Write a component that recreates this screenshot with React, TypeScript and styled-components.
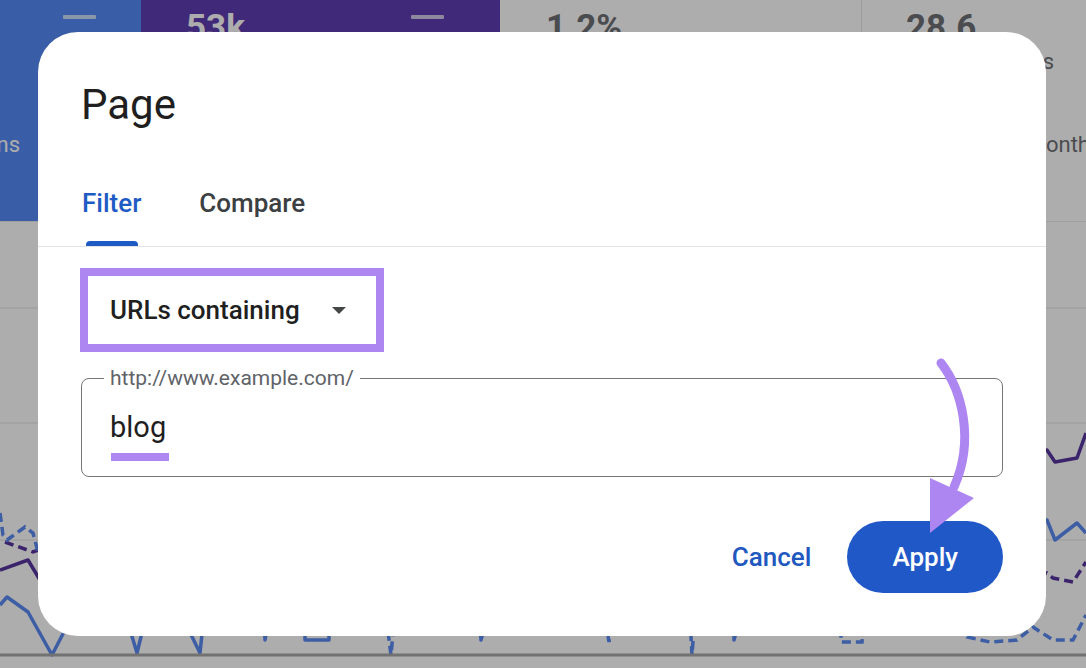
import React from 'react';
import styled, { createGlobalStyle } from 'styled-components';

const GlobalStyle = createGlobalStyle`
  html, body {
    margin: 0;
    padding: 0;
    background: #ffffff;
  }
  body {
    font-family: Roboto, 'Liberation Sans', Arial, sans-serif;
  }
`;

const Screen = styled.div`
  position: relative;
  width: 1086px;
  height: 668px;
  overflow: hidden;
  background: #ffffff;
`;

/* ---------- dashboard behind the dialog ---------- */

const MetricRow = styled.div`
  display: grid;
  grid-template-columns: 141px 359px 361px 1fr;
  height: 222px;
  border-bottom: 1px solid #ececec;
  box-sizing: border-box;
`;

const MetricCard = styled.div<{ $bg: string; $ink: string; $divider?: boolean }>`
  display: flex;
  flex-direction: column;
  background: ${p => p.$bg};
  color: ${p => p.$ink};
  border-left: ${p => (p.$divider ? '1px solid #e6e6e6' : 'none')};
  overflow: hidden;
  white-space: nowrap;
`;

const CardHead = styled.div<{ $padLeft: number; $padRight: number; $end?: boolean }>`
  display: flex;
  align-items: flex-start;
  justify-content: ${p => (p.$end ? 'flex-end' : 'space-between')};
  padding: 0 ${p => p.$padRight}px 0 ${p => p.$padLeft}px;
  height: 44px;
`;

const BigNumber = styled.div`
  font-size: 35px;
  font-weight: 700;
  line-height: 40px;
  margin-top: 8px;
`;

const CheckMark = styled.span`
  display: block;
  width: 33px;
  height: 4px;
  margin-top: 15px;
  border-radius: 1px;
  background: rgba(255, 255, 255, 0.72);
`;

/* labels that run past the card edge: flex-end keeps the tail in view */
const CardLabel = styled.div<{ $top: number; $end?: boolean; $pad: number }>`
  display: flex;
  justify-content: ${p => (p.$end ? 'flex-end' : 'flex-start')};
  margin-top: ${p => p.$top}px;
  font-size: 22px;
  line-height: 28px;
  padding: 0 ${p => (p.$end ? p.$pad : 0)}px 0 ${p => (p.$end ? 0 : p.$pad)}px;
`;

const ChartArea = styled.div`
  height: 446px;
`;

const ChartSvg = styled.svg`
  display: block;
  width: 1086px;
  height: 446px;
`;

const Scrim = styled.div`
  position: absolute;
  inset: 0;
  background: rgba(0, 0, 0, 0.32);
`;

/* ---------- dialog ---------- */

const Dialog = styled.div`
  position: absolute;
  left: 38px;
  top: 32px;
  width: 1008px;
  height: 604px;
  box-sizing: border-box;
  background: #ffffff;
  border-radius: 40px;
  display: flex;
  flex-direction: column;
  color: #1f1f1f;
`;

const Title = styled.h2`
  margin: 0;
  padding: 47px 43px 0 43px;
  font-size: 42px;
  font-weight: 400;
  line-height: 52px;
  color: #1f1f1f;
`;

const TabBar = styled.div`
  display: flex;
  gap: 58px;
  margin-top: 29px;
  padding: 0 43px 0 44px;
  border-bottom: 1px solid #e3e3e3;
`;

const Tab = styled.div<{ $active?: boolean }>`
  position: relative;
  height: 86px;
  display: flex;
  align-items: center;
  font-size: 26px;
  font-weight: 500;
  color: ${p => (p.$active ? '#1f5bc4' : '#3c4043')};

  &::after {
    content: '';
    display: ${p => (p.$active ? 'block' : 'none')};
    position: absolute;
    left: 4px;
    right: 3px;
    bottom: 0;
    height: 5px;
    border-radius: 4px 4px 0 0;
    background: #1f5bc4;
  }
`;

const Body = styled.div`
  display: flex;
  flex-direction: column;
  padding: 21px 43px 43px;
  flex: 1;
`;

const Highlight = styled.div`
  align-self: flex-start;
  margin-left: -1px;
  border: 8px solid #ae86f1;
`;

const Select = styled.div`
  display: flex;
  align-items: center;
  gap: 32px;
  width: 288px;
  height: 68px;
  box-sizing: border-box;
  padding: 0 0 0 22px;
  font-size: 26px;
  font-weight: 500;
  color: #1f1f1f;
`;

const Caret = styled.span`
  width: 0;
  height: 0;
  border-left: 7px solid transparent;
  border-right: 7px solid transparent;
  border-top: 7px solid #444746;
`;

const Field = styled.div`
  position: relative;
  margin-top: 26px;
  height: 99px;
  box-sizing: border-box;
  border: 1px solid #747775;
  border-radius: 8px;
  padding: 30px 28px 0;
`;

const FieldLabel = styled.span`
  position: absolute;
  left: 22px;
  top: -14px;
  padding: 0 6px;
  background: #ffffff;
  font-size: 21px;
  line-height: 26px;
  color: #5f6368;
`;

const FieldValue = styled.div`
  font-size: 29px;
  line-height: 36px;
  color: #1f1f1f;
`;

const Underline = styled.div`
  width: 58px;
  height: 8px;
  margin: 8px 0 0 1px;
  background: #ae86f1;
`;

const Actions = styled.div`
  display: flex;
  justify-content: flex-end;
  gap: 8px;
  margin-top: auto;
`;

const ActionButton = styled.button<{ $primary?: boolean }>`
  height: 72px;
  border: none;
  border-radius: 36px;
  padding: 0 ${p => (p.$primary ? 45 : 28)}px;
  font-family: inherit;
  font-size: 26px;
  font-weight: 500;
  background: ${p => (p.$primary ? '#2158c8' : 'transparent')};
  color: ${p => (p.$primary ? '#ffffff' : '#2158c0')};
  cursor: pointer;
`;

const Pointer = styled.svg`
  position: absolute;
  left: 915px;
  top: 350px;
  width: 70px;
  height: 190px;
  overflow: visible;
`;

/* chart series in chart-local coordinates (top of chart = 222px) */
const shift = (pts: [number, number][]) =>
  pts.map(([x, y]) => `${x},${y - 222}`).join(' ');

const blueSolid = shift([
  [0, 605], [7, 597], [28, 612], [52, 655], [66, 628], [95, 570], [118, 590],
  [137, 653], [150, 600], [172, 596], [200, 653], [206, 596], [240, 590],
  [263, 600], [265, 640], [272, 600], [305, 600], [305, 640], [329, 640],
  [329, 600], [420, 590], [478, 600], [481, 640], [492, 600], [600, 585],
  [734, 600], [734, 640], [745, 600], [900, 560], [1000, 530], [1047, 520],
  [1055, 540], [1077, 523], [1086, 533],
]);

const blueDashed = shift([
  [0, 513], [3, 535], [7, 540], [25, 527], [33, 533], [38, 552], [120, 560],
  [250, 580], [384, 600], [391, 655], [396, 600], [520, 590], [602, 600],
  [609, 642], [616, 600], [689, 600], [692, 655], [696, 600], [760, 596],
  [841, 600], [841, 642], [862, 642], [866, 600], [940, 600], [967, 637],
  [990, 642], [1017, 640], [1033, 627], [1053, 640], [1073, 640], [1086, 615],
]);

const purpleSolid = shift([
  [0, 570], [28, 560], [40, 580], [200, 540], [500, 500], [800, 470],
  [1047, 450], [1055, 462], [1077, 458], [1086, 433],
]);

const purpleDashed = shift([
  [5, 542], [33, 552], [44, 548], [300, 560], [700, 570], [1047, 573],
  [1053, 578], [1073, 582], [1086, 562],
]);

function TrafficChart() {
  return (
    <ChartSvg viewBox="0 0 1086 446">
      {[86, 201, 318].map(y => (
        <line key={y} x1="0" x2="1086" y1={y} y2={y} stroke="#ececec" strokeWidth="1.5" />
      ))}
      <polyline points={purpleSolid} fill="none" stroke="#57369f" strokeWidth="3.5" strokeLinejoin="round" />
      <polyline points={purpleDashed} fill="none" stroke="#57369f" strokeWidth="3.5" strokeDasharray="9 5" />
      <polyline points={blueSolid} fill="none" stroke="#5a8af3" strokeWidth="3.5" strokeLinejoin="round" />
      <polyline points={blueDashed} fill="none" stroke="#5a8af3" strokeWidth="3.5" strokeDasharray="9 5" />
      <line x1="0" x2="1086" y1="433" y2="433" stroke="#a8a8a8" strokeWidth="3" />
    </ChartSvg>
  );
}

export default function App() {
  return (
    <>
      <GlobalStyle />
      <Screen>
        <MetricRow>
          <MetricCard $bg="#5589f5" $ink="#ffffff">
            <CardHead $padLeft={0} $padRight={45} $end>
              <CheckMark />
            </CardHead>
            <CardLabel $top={87} $end $pad={121}>
              <span>Impressions</span>
            </CardLabel>
          </MetricCard>
          <MetricCard $bg="#5d3db2" $ink="#ffffff">
            <CardHead $padLeft={45} $padRight={56}>
              <BigNumber>53k</BigNumber>
              <CheckMark />
            </CardHead>
            <CardLabel $top={87} $pad={45}>Clicks</CardLabel>
          </MetricCard>
          <MetricCard $bg="#ffffff" $ink="#6f7175">
            <CardHead $padLeft={46} $padRight={40}>
              <BigNumber>1.2%</BigNumber>
            </CardHead>
            <CardLabel $top={87} $pad={46}>CTR</CardLabel>
          </MetricCard>
          <MetricCard $bg="#ffffff" $ink="#6f7175" $divider>
            <CardHead $padLeft={44} $padRight={20}>
              <BigNumber>28.6</BigNumber>
            </CardHead>
            <CardLabel $top={4} $end $pad={32}>
              <span>Positions</span>
            </CardLabel>
            <CardLabel $top={55} $pad={99}>
              Last 3 months
            </CardLabel>
          </MetricCard>
        </MetricRow>
        <ChartArea>
          <TrafficChart />
        </ChartArea>

        <Scrim />

        <Dialog role="dialog" aria-label="Page">
          <Title>Page</Title>
          <TabBar>
            <Tab $active>Filter</Tab>
            <Tab>Compare</Tab>
          </TabBar>
          <Body>
            <Highlight>
              <Select>
                URLs containing
                <Caret />
              </Select>
            </Highlight>
            <Field>
              <FieldLabel>http://www.example.com/</FieldLabel>
              <FieldValue>blog</FieldValue>
              <Underline />
            </Field>
            <Actions>
              <ActionButton>Cancel</ActionButton>
              <ActionButton $primary>Apply</ActionButton>
            </Actions>
          </Body>
        </Dialog>

        <Pointer viewBox="0 0 70 190">
          <path
            d="M26 13 C47 40, 60 90, 39 137"
            fill="none"
            stroke="#ae86f1"
            strokeWidth="9"
            strokeLinecap="round"
          />
          <polygon points="15,128 59,148 15,183" fill="#ae86f1" />
        </Pointer>
      </Screen>
    </>
  );
}
